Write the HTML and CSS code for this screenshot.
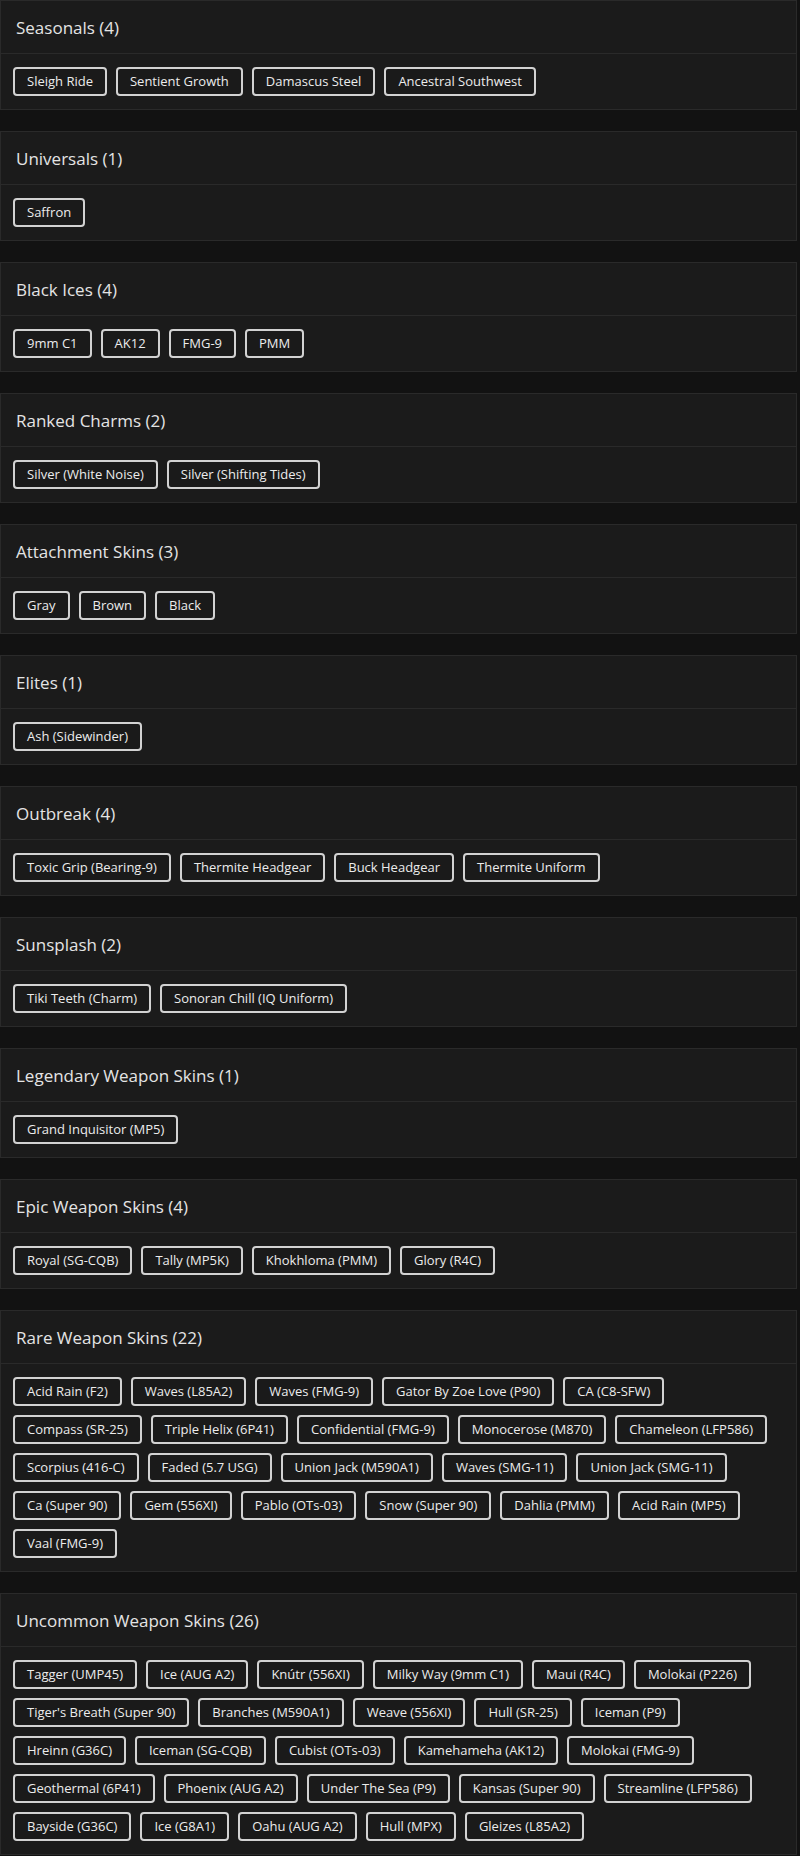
FILE: index.html
```html
<!DOCTYPE html>
<html lang="en">
<head>
<meta charset="utf-8">
<title>Collection</title>
<link rel="stylesheet" href="styles.css">
</head>
<body>
<main class="list">
  <section class="card">
    <h2 class="card-title">Seasonals (4)</h2>
    <div class="chips">
      <span class="chip">Sleigh Ride</span><span class="chip">Sentient Growth</span><span class="chip">Damascus Steel</span><span class="chip">Ancestral Southwest</span>
    </div>
  </section>
  <section class="card">
    <h2 class="card-title">Universals (1)</h2>
    <div class="chips"><span class="chip">Saffron</span></div>
  </section>
  <section class="card">
    <h2 class="card-title">Black Ices (4)</h2>
    <div class="chips"><span class="chip">9mm C1</span><span class="chip">AK12</span><span class="chip">FMG-9</span><span class="chip">PMM</span></div>
  </section>
  <section class="card">
    <h2 class="card-title">Ranked Charms (2)</h2>
    <div class="chips"><span class="chip">Silver (White Noise)</span><span class="chip">Silver (Shifting Tides)</span></div>
  </section>
  <section class="card">
    <h2 class="card-title">Attachment Skins (3)</h2>
    <div class="chips"><span class="chip">Gray</span><span class="chip">Brown</span><span class="chip">Black</span></div>
  </section>
  <section class="card">
    <h2 class="card-title">Elites (1)</h2>
    <div class="chips"><span class="chip">Ash (Sidewinder)</span></div>
  </section>
  <section class="card">
    <h2 class="card-title">Outbreak (4)</h2>
    <div class="chips"><span class="chip">Toxic Grip (Bearing-9)</span><span class="chip">Thermite Headgear</span><span class="chip">Buck Headgear</span><span class="chip">Thermite Uniform</span></div>
  </section>
  <section class="card">
    <h2 class="card-title">Sunsplash (2)</h2>
    <div class="chips"><span class="chip">Tiki Teeth (Charm)</span><span class="chip">Sonoran Chill (IQ Uniform)</span></div>
  </section>
  <section class="card">
    <h2 class="card-title">Legendary Weapon Skins (1)</h2>
    <div class="chips"><span class="chip">Grand Inquisitor (MP5)</span></div>
  </section>
  <section class="card">
    <h2 class="card-title">Epic Weapon Skins (4)</h2>
    <div class="chips"><span class="chip">Royal (SG-CQB)</span><span class="chip">Tally (MP5K)</span><span class="chip">Khokhloma (PMM)</span><span class="chip">Glory (R4C)</span></div>
  </section>
  <section class="card">
    <h2 class="card-title">Rare Weapon Skins (22)</h2>
    <div class="chips">
      <span class="chip">Acid Rain (F2)</span><span class="chip">Waves (L85A2)</span><span class="chip">Waves (FMG-9)</span><span class="chip">Gator By Zoe Love (P90)</span><span class="chip">CA (C8-SFW)</span><span class="chip">Compass (SR-25)</span><span class="chip">Triple Helix (6P41)</span><span class="chip">Confidential (FMG-9)</span><span class="chip">Monocerose (M870)</span><span class="chip">Chameleon (LFP586)</span><span class="chip">Scorpius (416-C)</span><span class="chip">Faded (5.7 USG)</span><span class="chip">Union Jack (M590A1)</span><span class="chip">Waves (SMG-11)</span><span class="chip">Union Jack (SMG-11)</span><span class="chip">Ca (Super 90)</span><span class="chip">Gem (556XI)</span><span class="chip">Pablo (OTs-03)</span><span class="chip">Snow (Super 90)</span><span class="chip">Dahlia (PMM)</span><span class="chip">Acid Rain (MP5)</span><span class="chip">Vaal (FMG-9)</span>
    </div>
  </section>
  <section class="card">
    <h2 class="card-title">Uncommon Weapon Skins (26)</h2>
    <div class="chips">
      <span class="chip">Tagger (UMP45)</span><span class="chip">Ice (AUG A2)</span><span class="chip">Knútr (556XI)</span><span class="chip">Milky Way (9mm C1)</span><span class="chip">Maui (R4C)</span><span class="chip">Molokai (P226)</span><span class="chip">Tiger's Breath (Super 90)</span><span class="chip">Branches (M590A1)</span><span class="chip">Weave (556XI)</span><span class="chip">Hull (SR-25)</span><span class="chip">Iceman (P9)</span><span class="chip">Hreinn (G36C)</span><span class="chip">Iceman (SG-CQB)</span><span class="chip">Cubist (OTs-03)</span><span class="chip">Kamehameha (AK12)</span><span class="chip">Molokai (FMG-9)</span><span class="chip">Geothermal (6P41)</span><span class="chip">Phoenix (AUG A2)</span><span class="chip">Under The Sea (P9)</span><span class="chip">Kansas (Super 90)</span><span class="chip">Streamline (LFP586)</span><span class="chip">Bayside (G36C)</span><span class="chip">Ice (G8A1)</span><span class="chip">Oahu (AUG A2)</span><span class="chip">Hull (MPX)</span><span class="chip">Gleizes (L85A2)</span>
    </div>
  </section>
</main>
</body>
</html>
```
FILE: styles.css
```css
html, body {
  margin: 0;
  padding: 0;
  background: #121212;
}
body {
  font-family: "Open Sans", "Noto Sans", sans-serif;
  color: #e6e6e6;
}
.list {
  display: flex;
  flex-direction: column;
  gap: 21px;
}
.card {
  background: #1b1b1b;
  border: 1px solid #2a2a2a;
  margin-right: 3px;
}
.card-title {
  margin: 0;
  height: 53px;
  display: flex;
  align-items: center;
  padding: 0 15px;
  font-size: 17px;
  font-weight: 500;
  color: #e4e4e4;
  border-bottom: 1px solid #2a2a2a;
  box-sizing: border-box;
}
.chips {
  display: flex;
  flex-wrap: wrap;
  gap: 9px 9px;
  padding: 13px 12px;
}
.chip {
  display: inline-block;
  font-size: 13px;
  line-height: 17px;
  padding: 4px 12px;
  border: 2px solid #d2d2d2;
  border-radius: 4px;
  color: #ececec;
  background: #1a1a1a;
  white-space: nowrap;
}
```
